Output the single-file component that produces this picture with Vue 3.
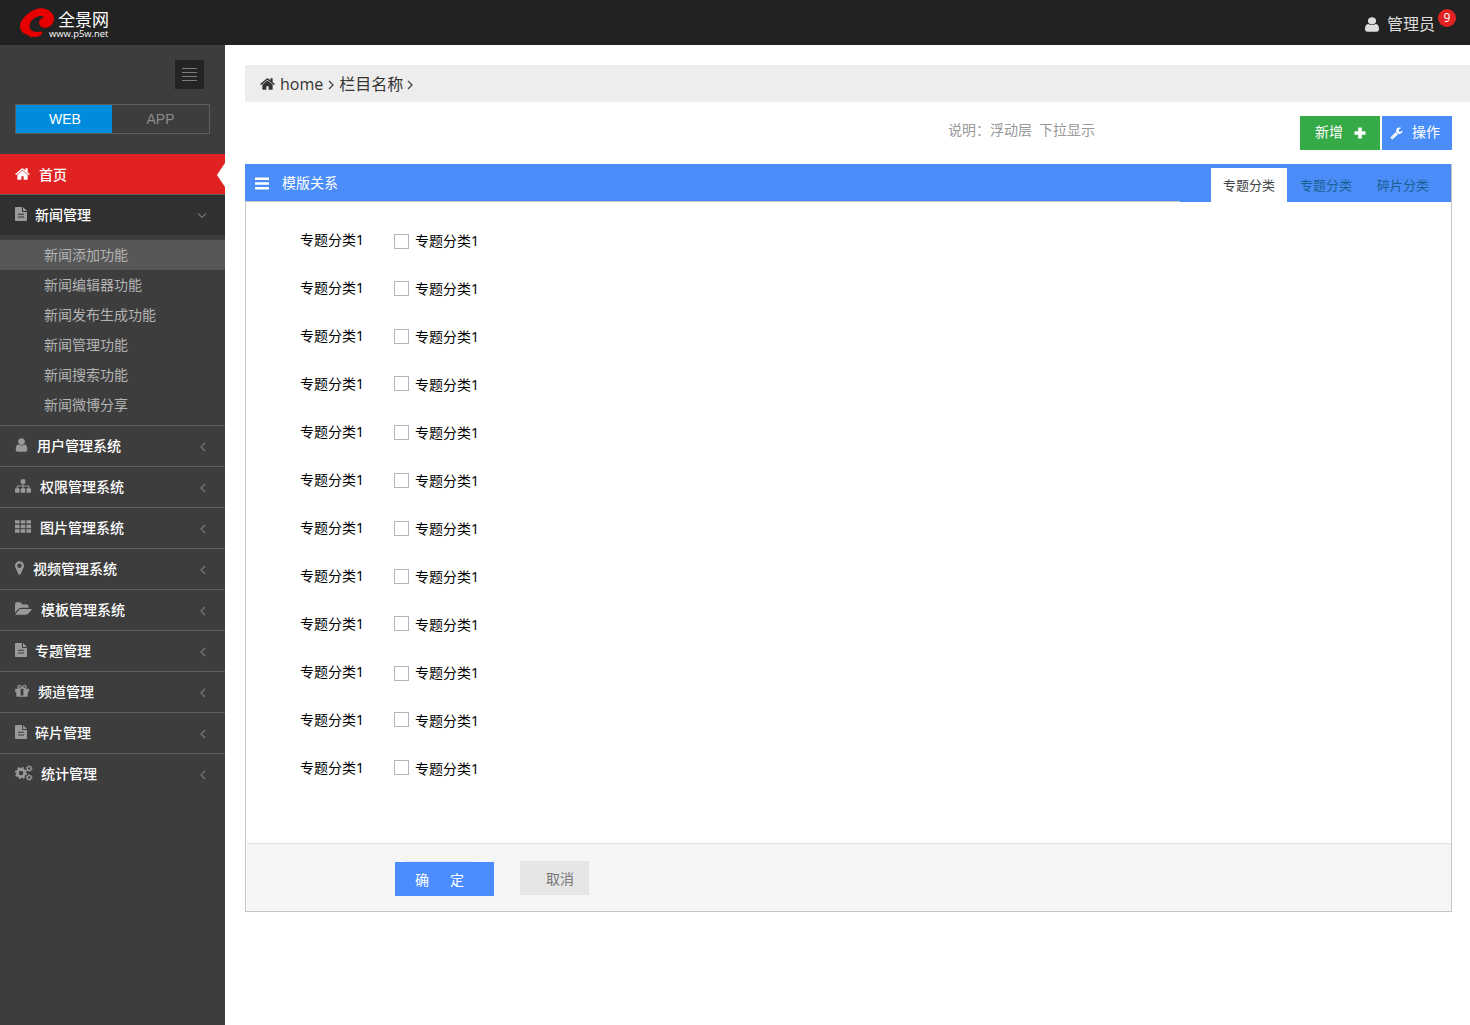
<script setup>
const glyphs = {
  home: { w: 1664, ox: 64, d: 'M1472 992v480q0 26-19 45t-45 19h-384v-384h-256v384h-384q-26 0-45-19t-19-45v-480q0-1 .5-3t.5-3l575-474 575 474q1 2 1 6zm223-69l-62 74q-8 9-21 11h-3q-13 0-21-7l-692-577-692 577q-12 8-24 7-13-2-21-11l-62-74q-8-10-7-23.5t11-21.5l719-599q32-26 76-26t76 26l244 204v-195q0-14 9-23t23-9h192q14 0 23 9t9 23v408l219 182q10 8 11 21.5t-7 23.5z' },
  user: { w: 1280, ox: 256, d: 'M1536 1399q0 109-62.5 187t-150.5 78h-854q-88 0-150.5-78t-62.5-187q0-85 8.5-160.5t31.5-152 58.5-131 94-89 134.5-34.5q131 128 313 128t313-128q76 0 134.5 34.5t94 89 58.5 131 31.5 152 8.5 160.5zm-256-887q0 159-112.5 271.5t-271.5 112.5-271.5-112.5-112.5-271.5 112.5-271.5 271.5-112.5 271.5 112.5 112.5 271.5z' },
  sitemap: { w: 1792, ox: 0, d: 'M1792 1248v320q0 40-28 68t-68 28h-320q-40 0-68-28t-28-68v-320q0-40 28-68t68-28h96v-192h-512v192h96q40 0 68 28t28 68v320q0 40-28 68t-68 28h-320q-40 0-68-28t-28-68v-320q0-40 28-68t68-28h96v-192h-512v192h96q40 0 68 28t28 68v320q0 40-28 68t-68 28h-320q-40 0-68-28t-28-68v-320q0-40 28-68t68-28h96v-192q0-52 38-90t90-38h512v-192h-96q-40 0-68-28t-28-68v-320q0-40 28-68t68-28h320q40 0 68 28t28 68v320q0 40-28 68t-68 28h-96v192h512q52 0 90 38t38 90v192h96q40 0 68 28t28 68z' },
  grid: { w: 1792, ox: 0, d: 'M0 128h512v384h-512zM640 128h512v384h-512zM1280 128h512v384h-512zM0 640h512v384h-512zM640 640h512v384h-512zM1280 640h512v384h-512zM0 1152h512v384h-512zM640 1152h512v384h-512zM1280 1152h512v384h-512z' },
  marker: { w: 1024, ox: 384, d: 'M1152 640q0-106-75-181t-181-75-181 75-75 181 75 181 181 75 181-75 75-181zm256 0q0 109-33 179l-364 774q-16 33-47.5 52t-67.5 19-67.5-19-46.5-52l-365-774q-33-70-33-179 0-212 150-362t362-150 362 150 150 362z' },
  folder: { w: 1920, ox: 0, d: 'M1879 952q0 31-31 66l-336 396q-43 51-120.5 86.5t-143.5 35.5h-1088q-34 0-60.5-13t-26.5-43q0-31 31-66l336-396q43-51 120.5-86.5t143.5-35.5h1088q34 0 60.5 13t26.5 43zm-343-344v160h-832q-94 0-197 47.5t-164 119.5l-337 396-5 6q0-4-.5-12.5t-.5-12.5v-960q0-92 66-158t158-66h320q92 0 158 66t66 158v32h544q92 0 158 66t66 158z' },
  gift: { w: 1536, ox: 128, d: 'M1056 1356v-716h-320v716q0 25 18 38.5t46 13.5h192q28 0 46-13.5t18-38.5zm-456-844h195l-126-161q-26-31-69-31-40 0-68 28t-28 68 28 68 68 28zm688-96q0-40-28-68t-68-28q-43 0-69 31l-125 161h194q40 0 68-28t28-68zm376 256v320q0 14-9 23t-23 9h-96v416q0 40-28 68t-68 28h-1088q-40 0-68-28t-28-68v-416h-96q-14 0-23-9t-9-23v-320q0-14 9-23t23-9h440q-93 0-158.5-65.5t-65.5-158.5 65.5-158.5 158.5-65.5q107 0 168 77l128 165 128-165q61-77 168-77 93 0 158.5 65.5t65.5 158.5-65.5 158.5-158.5 65.5h440q14 0 23 9t9 23z' },
  file: { w: 1536, ox: 0, d: 'M0 96q0-96 96-96h800v544q0 96 96 96h544v1056q0 96-96 96h-1344q-96 0-96-96zM384 864v128h768v-128zM384 1216v128h768v-128zM1024 0l512 512h-512z' },
}
const systems = [
  { icon: 'user', label: '用户管理系统', w: 13, gap: 9 },
  { icon: 'sitemap', label: '权限管理系统', w: 16, gap: 9 },
  { icon: 'grid', label: '图片管理系统', w: 16, gap: 9 },
  { icon: 'marker', label: '视频管理系统', w: 9, gap: 9 },
  { icon: 'folder', label: '模板管理系统', w: 17, gap: 9 },
  { icon: 'file', label: '专题管理', w: 12, gap: 8 },
  { icon: 'gift', label: '频道管理', w: 14, gap: 9 },
  { icon: 'file', label: '碎片管理', w: 12, gap: 8 },
  { icon: 'cogs', label: '统计管理', w: 18, gap: 8 },
]
const newsItems = ['新闻添加功能', '新闻编辑器功能', '新闻发布生成功能', '新闻管理功能', '新闻搜索功能', '新闻微博分享']
const boxOffsets = [0, -1, -1, -2, -1, -1, -1, -1, -2, 0, -2, -2]
</script>

<template>
  <div class="page">
    <header class="topbar">
      <div class="logo">
        <svg class="swirl" width="36" height="31" viewBox="0 0 36 31">
          <path fill="#e60000" d="M21 .2C17 0 11.500 2.600 7 6.500 2.500 10.500 0 14.500 0 18c0 5 3.500 8.300 9 9.200l-.8 1.300 2.200-.3 1.200 1.300 1.400-1 2.200 1.100 1.300-1.400 2.300.7.5-1.300 2.600-.4-.8-1.400 1.800-1-1.500-1.400c-4 .9-8 .6-10-1.200-2.400-2-2.500-5.500-.5-8.700C13 10.500 17.500 7.800 21.500 8c1.400.1 2.300.6 2.800 1.300-2.500.4-5.300 2.600-5.200 5.500.1 3.400 3.200 5.300 6.700 5C30.500 19.400 34 15.500 34 10.800 34 5 28.500.4 21 .2z" />
        </svg>
        <div class="logo-text"><b>全景网</b><span>www.p5w.net</span></div>
      </div>
      <div class="account">
        <svg width="14" height="17" viewBox="256 0 1280 1792" preserveAspectRatio="none"><path fill="#ddd" :d="glyphs.user.d" /></svg>
        <span class="name">管理员</span>
        <span class="badge">9</span>
      </div>
    </header>
    <div class="body">
      <aside class="sidebar">
        <div class="collapse"><i v-for="n in 4" :key="n"></i></div>
        <div class="switch"><span class="on">WEB</span><span>APP</span></div>
        <nav>
          <div class="item active">
            <svg width="15" height="16" viewBox="64 0 1664 1792"><path :d="glyphs.home.d" /></svg>
            <span class="label home-label">首页</span>
            <svg class="notch" width="8" height="24" viewBox="0 0 8 24"><path d="M8 0v24L0 12z" /></svg>
          </div>
          <div class="item open">
            <svg width="12" height="14" viewBox="0 0 1536 1792"><path :d="glyphs.file.d" fill-rule="evenodd" /></svg>
            <span class="label open-label">新闻管理</span>
            <svg class="arrow down" width="10" height="7" viewBox="0 0 10 7"><path d="M1 1.300l4 4 4-4" /></svg>
          </div>
          <ul>
            <li v-for="(t, i) in newsItems" :key="t" :class="{ selected: i === 0 }"><span>{{ t }}</span></li>
          </ul>
          <div v-for="s in systems" :key="s.label" class="item">
            <svg v-if="s.icon === 'cogs'" width="18" height="16" viewBox="0 0 18 16" class="cogs">
              <circle cx="6" cy="8" r="3.600" stroke-width="2.600" />
              <circle cx="6" cy="8" r="5.200" stroke-width="1.800" stroke-dasharray="2.050 2.034" />
              <circle cx="14.200" cy="3.500" r="1.900" stroke-width="1.300" />
              <circle cx="14.200" cy="3.500" r="2.800" stroke-width="1" stroke-dasharray="1.500 1.430" />
              <circle cx="14.200" cy="12.500" r="1.900" stroke-width="1.300" />
              <circle cx="14.200" cy="12.500" r="2.800" stroke-width="1" stroke-dasharray="1.500 1.430" />
            </svg>
            <svg v-else :width="s.w" :height="s.icon === 'file' ? 14 : 16" :viewBox="`${glyphs[s.icon].ox} 0 ${glyphs[s.icon].w} 1792`">
              <path :d="glyphs[s.icon].d" fill-rule="evenodd" />
            </svg>
            <span class="label" :style="{ marginLeft: s.gap + 'px' }">{{ s.label }}</span>
            <svg class="arrow" width="6" height="10" viewBox="0 0 6 10"><path d="M5 1L1 5l4 4" /></svg>
          </div>
        </nav>
      </aside>
      <main>
        <div class="crumbs">
          <svg width="15" height="16" viewBox="64 0 1664 1792"><path fill="#333" :d="glyphs.home.d" /></svg>
          <span class="crumb-home">home</span>
          <svg class="sep" width="6" height="10" viewBox="0 0 6 10"><path d="M1 1l4 4-4 4" /></svg>
          <span class="crumb-name">栏目名称</span>
          <svg class="sep" width="6" height="10" viewBox="0 0 6 10"><path d="M1 1l4 4-4 4" /></svg>
        </div>
        <div class="tools">
          <p class="note"><span>说明：浮动层</span><span>下拉显示</span></p>
          <button class="add">
            新增
            <svg width="12" height="12" viewBox="0 0 12 12"><path fill="#fff" d="M4.200.5h3.600v3.700h3.700v3.600H7.800v3.700H4.200V7.800H.5V4.200h3.700z" /></svg>
          </button>
          <button class="operate">
            <svg width="13" height="14" viewBox="0 0 1792 1792"><path fill="#fff" d="M448 1472q0-26-19-45t-45-19-45 19-19 45 19 45 45 19 45-19 19-45zm644-420l-682 682q-37 37-90 37-52 0-91-37l-106-108q-38-36-38-90 0-53 38-91l681-681q39 98 114.500 173.500t173.500 114.500zm634-435q0 39-23 106-47 134-164.500 217.500t-258.500 83.500q-185 0-316.500-131.500t-131.500-316.500 131.500-316.500 316.500-131.500q58 0 121.500 16.500t107.500 46.500q16 11 16 28t-16 28l-293 169v224l193 107q5-3 79-48.500t135.500-81 70.500-35.500q15 0 23.500 10t8.500 25z" /></svg>
            操作
          </button>
        </div>
        <section class="panel">
          <div class="panel-head">
            <div class="title">
              <svg width="14" height="13" viewBox="0 0 14 13"><path fill="#fff" d="M0 .5h14v2.500H0zM0 5.300h14v2.500H0zM0 10h14v2.500H0z" /></svg>
              <span>模版关系</span>
            </div>
            <div class="tabs">
              <span class="current">专题分类</span><span>专题分类</span><span>碎片分类</span>
            </div>
          </div>
          <div class="rows">
            <div v-for="(o, i) in boxOffsets" :key="i" class="row">
              <span class="row-name">专题分类1</span>
              <label><i :style="{ marginTop: 18 + o + 'px' }"></i><span>专题分类1</span></label>
            </div>
          </div>
          <div class="panel-foot">
            <button class="ok"><span>确</span><span>定</span></button>
            <button class="cancel">取消</button>
          </div>
        </section>
      </main>
    </div>
  </div>
</template>

<style>
body { margin: 0; background: #fff; }
</style>

<style scoped>
.page { width: 1470px; height: 1025px; overflow: hidden; display: flex; flex-direction: column; font: 14px "Open Sans", "Noto Sans CJK SC", sans-serif; color: #000; }
.page * { box-sizing: border-box; }
svg { display: block; flex: none; }
button { border: 0; padding: 0; font: inherit; display: flex; }
.topbar { height: 45px; flex: none; background: #222; display: flex; justify-content: space-between; }
.logo { display: flex; padding: 8px 0 0 20px; }
.logo-text { display: flex; flex-direction: column; color: #fff; margin: 2px 0 0 -7px; }
.logo-text b { font: 17px/18px "Noto Sans CJK SC", sans-serif; margin-left: 9px; white-space: nowrap; }
.logo-text span { font: 9.400px/11px "Open Sans", sans-serif; }
.account { display: flex; padding: 7px 15px 0 0; }
.account svg { margin: 9px 8px 0 0; }
.name { font: 16px/32px "Noto Sans CJK SC", sans-serif; color: #ddd; }
.badge { width: 18px; height: 18px; border-radius: 9px; background: #e02222; color: #fff; font-size: 12px; line-height: 18px; text-align: center; margin: 2px 0 0 3px; }
.account { padding-right: 14px; }
.body { display: flex; flex: 1; }
.sidebar { width: 225px; flex: none; background: #3d3d3d; padding-top: 15px; }
.collapse { width: 29px; height: 29px; margin-left: 175px; background: #242424; display: flex; flex-direction: column; gap: 3px; padding: 8px 7px 0; }
.collapse i { height: 1px; background: #7d7d7d; }
.switch { display: flex; width: 195px; height: 30px; margin: 15px 0 20px 15px; border: 1px solid #5e5e5e; font: 14px/28px "Liberation Sans", Arial, sans-serif; color: #8c8c8c; text-align: center; }
.switch span { width: 97px; }
.switch .on { width: 96px; background: #008cdd; color: #fff; padding-left: 2px; }
.item { height: 41px; border-top: 1px solid #5e5e5e; display: flex; align-items: center; padding: 0 0 2px 15px; position: relative; color: #fff; }
.item > svg:first-child { fill: #999; }
.item .cogs { fill: none !important; stroke: #999; }
.label { font: 500 14px/38px "Noto Sans CJK SC", sans-serif; }
.item.active { height: 40px; border: 0; background: #e02222; padding-bottom: 0; }
.item.active > svg { fill: #fff; }
.home-label { margin-left: 9px; }
.item.open { background: #303030; }
.open-label { margin-left: 8px; }
.notch { position: absolute; right: 0; top: 9px; }
.arrow { margin: 3px 19px 0 auto; fill: none; stroke: #777; stroke-width: 1.200; }
.arrow.down { margin-right: 18px; }
ul { list-style: none; margin: 0; padding: 5px 0; height: 190px; }
li { height: 30px; padding-left: 44px; font: 14px/28px "Noto Sans CJK SC", sans-serif; color: #b3b3b3; }
li.selected { background: #575757; }
main { flex: 1; padding: 20px 0 0 20px; }
.crumbs { height: 37px; background: #ededed; display: flex; align-items: center; padding-left: 15px; color: #333; }
.crumb-home { font-size: 16px; margin: 0 5px; }
.crumb-name { font: 16px/37px "Noto Sans CJK SC", sans-serif; margin: 0 4px 0 5px; }
.sep { fill: none; stroke: #444; stroke-width: 1.300; margin-top: 2px; }
.tools { display: flex; height: 62px; padding-top: 14px; }
.note { margin: 0 205px 0 703px; width: 147px; display: flex; justify-content: space-between; font: 14px/26px "Noto Sans CJK SC", sans-serif; color: #999; white-space: nowrap; }
.add, .operate { height: 34px; color: #fff; line-height: 32px; align-items: center; padding-bottom: 2px; }
.add svg, .operate svg { margin-top: 2px; }
.add { width: 80px; background: #35aa47; padding-left: 15px; gap: 11px; }
.operate { width: 70px; margin-left: 2px; background: #4b8df8; padding-left: 8px; gap: 9px; }
.panel { width: 1207px; height: 748px; border: 1px solid #c5c5c5; border-top: 0; display: flex; flex-direction: column; }
.panel-head { height: 38px; margin: 0 0 0 -1px; background: #4b8df8; display: flex; justify-content: space-between; }
.title { width: 935px; height: 38px; border-bottom: 1px solid #c5c5c5; display: flex; align-items: center; color: #fff; padding: 0 0 0 10px; gap: 13px; font-family: "Noto Sans CJK SC", sans-serif; }
.title span { margin-top: -1px; }
.title svg { margin-top: 1px; }
.tabs { display: flex; width: 240px; padding-top: 4px; font: 13px/34px "Noto Sans CJK SC", sans-serif; color: #1a6293; }
.tabs span { width: 77px; text-align: center; padding-left: 1px; }
.tabs .current { width: 76px; background: #fff; color: #444; padding-left: 0; }
.rows { padding: 14px 0 0 54px; height: 641px; }
.row { display: flex; height: 48px; font: 14px/48px "Noto Sans", "Noto Sans CJK SC", sans-serif; }
.row-name { width: 94px; }
label { display: flex; }
label i { width: 15px; height: 15px; border: 1px solid #b5b5b5; background: #fff; }
label span { margin-left: 6px; line-height: 50px; }
.panel-foot { flex: 1; margin-left: 1px; background: #f5f5f5; border-top: 1px solid #e3e3e3; display: flex; padding-left: 148px; }
.ok { width: 99px; height: 34px; margin-top: 18px; background: #4b8dff; color: #fff; line-height: 35px; padding-left: 20px; gap: 21px; position: relative; }
.ok::before { content: ""; position: absolute; left: 10px; top: -1px; width: 69px; height: 1px; background: #e5e5e5; }
.cancel { width: 69px; height: 34px; margin: 17px 0 0 26px; background: #e5e5e5; color: #777; line-height: 35px; padding-left: 26px; }
</style>
